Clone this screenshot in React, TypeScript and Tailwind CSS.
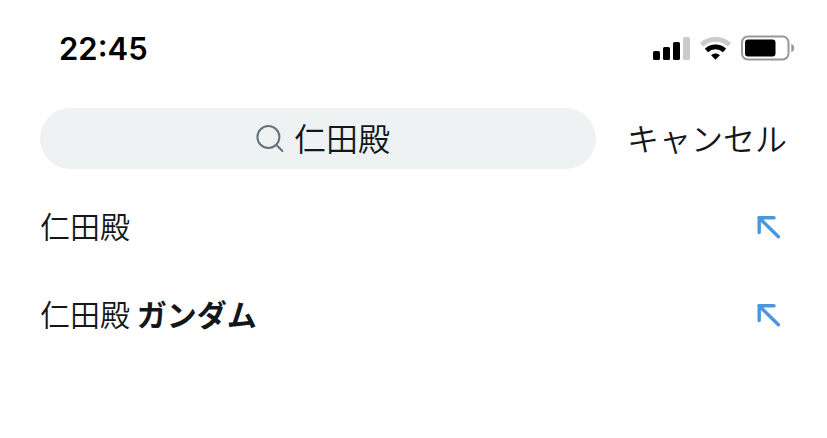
import { useState } from 'react';

type Suggestion = {
  query: string;
  completion?: string;
};

const suggestions: Suggestion[] = [{ query: '仁田殿' }, { query: '仁田殿', completion: 'ガンダム' }];

function SignalIcon() {
  return (
    <svg viewBox="0 0 37 24" className="h-6 w-[37px]" aria-hidden>
      <rect x="0" y="15" width="7" height="9" rx="1.6" fill="#000" />
      <rect x="10" y="11" width="7" height="13" rx="1.6" fill="#000" />
      <rect x="20" y="6" width="7" height="18" rx="1.6" fill="#000" />
      <rect x="30" y="1" width="7" height="23" rx="1.6" fill="#cbcbcb" />
    </svg>
  );
}

function WifiIcon() {
  return (
    <svg viewBox="0.5 0 31 24" className="h-6 w-[31px]" fill="none" aria-hidden>
      <path d="M2 8.8C9.8 1.6 22.2 1.6 30 8.8" stroke="#cbcbcb" strokeWidth="4.8" />
      <path d="M7 14.4C12 9.8 20 9.8 25 14.4" stroke="#000" strokeWidth="4.8" />
      <path d="M11.6 19.2C14.2 17 17.8 17 20.4 19.2L16 23.8Z" fill="#000" />
    </svg>
  );
}

function BatteryIcon() {
  return (
    <svg viewBox="0 0 54 26" className="h-[26px] w-[54px]" aria-hidden>
      <rect x="1" y="1.5" width="46.5" height="23" rx="6" fill="none" stroke="#989898" strokeWidth="2" />
      <rect x="4" y="4.5" width="30.5" height="17" rx="3" fill="#000" />
      <path d="M50.3 8.8C54.2 10.2 54.2 16 50.3 17.4Z" fill="#989898" />
    </svg>
  );
}

function SearchIcon() {
  return (
    <svg viewBox="0 0 28 28" className="size-7 shrink-0" fill="none" stroke="#65717d" strokeWidth="2" aria-hidden>
      <circle cx="12.4" cy="12" r="11" />
      <path d="M20.4 20L26.4 26" strokeLinecap="round" />
    </svg>
  );
}

function FillArrowIcon() {
  return (
    <svg
      viewBox="0 0 24 24"
      className="size-6"
      fill="none"
      stroke="#4a97dd"
      strokeWidth="3.4"
      strokeLinecap="round"
      strokeLinejoin="round"
      aria-hidden
    >
      <path d="M2.2 17.5V2.8H17" />
      <path d="M2.2 2.8L21.4 21.8" />
    </svg>
  );
}

export default function App() {
  const [query, setQuery] = useState('仁田殿');

  return (
    <main className="min-h-screen bg-white font-['Noto_Sans_CJK_JP',sans-serif] font-[350] text-[#14171a]">
      <div className="flex h-24 items-center justify-between pr-8 pl-[59px]">
        <time className="font-[Inter,sans-serif] text-[31px] leading-none font-semibold text-black">22:45</time>
        <div className="flex items-center gap-[10px]">
          <SignalIcon />
          <WifiIcon />
          <BatteryIcon />
        </div>
      </div>

      <form
        role="search"
        className="flex items-center gap-[31px] px-10 pt-3 text-[32px]"
        onSubmit={(event) => event.preventDefault()}
      >
        <label className="flex h-[61px] min-w-0 flex-1 cursor-text items-center justify-center gap-[10px] rounded-full bg-[#eef2f3] pl-[10px]">
          <SearchIcon />
          <input
            type="text"
            aria-label="検索"
            value={query}
            onChange={(event) => setQuery(event.target.value)}
            className="field-sizing-content h-[60px] min-w-0 bg-transparent pb-1 outline-none"
          />
        </label>
        <button type="button" className="shrink-0 pb-1 leading-[56px]" onClick={() => setQuery('')}>
          キャンセル
        </button>
      </form>

      <ul className="pt-[14px]">
        {suggestions.map(({ query: text, completion }) => (
          <li key={text + (completion ?? '')} className="flex h-[88px] items-center justify-between pr-[46px] pl-10">
            <a href="#" className="pb-1 text-[30px]">
              {text}
              {completion && <b className="font-bold"> {completion}</b>}
            </a>
            <button
              type="button"
              aria-label="検索欄に入力"
              onClick={() => setQuery(completion ? `${text} ${completion}` : text)}
            >
              <FillArrowIcon />
            </button>
          </li>
        ))}
      </ul>
    </main>
  );
}
